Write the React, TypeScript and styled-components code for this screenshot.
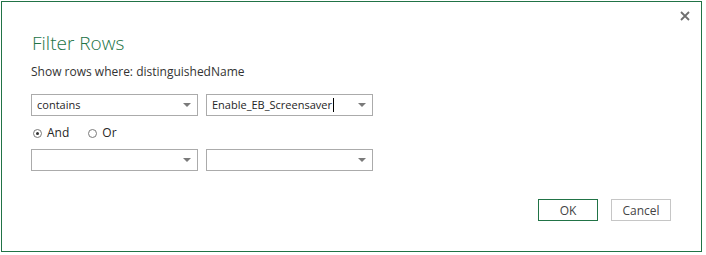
import styled, { createGlobalStyle } from "styled-components";

const GlobalStyle = createGlobalStyle`
  html, body {
    margin: 0;
    padding: 0;
    background: #ffffff;
  }
  body {
    font-family: "Open Sans", "Noto Sans", "Liberation Sans", sans-serif;
    color: #262626;
  }
`;

interface DropdownProps {
  value?: string;
  editing?: boolean;
}

const Dropdown = ({ value, editing }: DropdownProps) => {
  return (
    <Select>
      <SelectValue>
        {value}
        {editing && <Caret />}
      </SelectValue>
      <Arrow />
    </Select>
  );
};

interface RadioProps {
  label: string;
  checked?: boolean;
}

const Radio = ({ label, checked }: RadioProps) => {
  return (
    <RadioLabel>
      <RadioCircle>{checked && <RadioDot />}</RadioCircle>
      {label}
    </RadioLabel>
  );
};

const App = () => {
  return (
    <>
      <GlobalStyle />
      <Dialog>
        <TopBar>
          <CloseButton aria-label="Close">
            <svg width="10" height="10" viewBox="0 0 10 10">
              <path
                d="M1 1 L9 9 M9 1 L1 9"
                stroke="#6f6f6f"
                strokeWidth="1.8"
                fill="none"
              />
            </svg>
          </CloseButton>
        </TopBar>
        <Content>
          <Title>Filter Rows</Title>
          <Subtitle>Show rows where: distinguishedName</Subtitle>
          <FilterRow $top={14}>
            <Dropdown value="contains" />
            <Dropdown value="Enable_EB_Screensaver" editing />
          </FilterRow>
          <RadioRow>
            <Radio label="And" checked />
            <Radio label="Or" />
          </RadioRow>
          <FilterRow $top={8}>
            <Dropdown />
            <Dropdown />
          </FilterRow>
        </Content>
        <ActionBar>
          <Button $primary>OK</Button>
          <Button>Cancel</Button>
        </ActionBar>
      </Dialog>
    </>
  );
};

export default App;

const Dialog = styled.div`
  box-sizing: border-box;
  margin: 1px 0 0 1px;
  width: 701px;
  height: 251px;
  border: 1px solid #217346;
  background: #ffffff;
  display: flex;
  flex-direction: column;
`;

const TopBar = styled.div`
  display: flex;
  justify-content: flex-end;
  padding: 9px 11px 0 0;
  height: 18px;
`;

const CloseButton = styled.button`
  border: none;
  background: none;
  padding: 0;
  width: 10px;
  height: 10px;
  display: flex;
  cursor: pointer;
`;

const Content = styled.div`
  display: flex;
  flex-direction: column;
  padding-left: 29px;
`;

const Title = styled.h1`
  margin: 0;
  font-size: 19px;
  font-weight: 300;
  line-height: 28px;
  color: #217346;
  padding-left: 1px;
`;

const Subtitle = styled.div`
  margin-top: 7px;
  font-size: 12px;
  line-height: 16px;
  color: #333333;
`;

const FilterRow = styled.div<{ $top: number }>`
  display: flex;
  gap: 8px;
  margin-top: ${(p) => p.$top}px;
`;

const Select = styled.div`
  box-sizing: border-box;
  width: 167px;
  height: 22px;
  border: 1px solid #ababab;
  display: flex;
  align-items: center;
  padding: 0 6px 0 5px;
`;

const SelectValue = styled.span`
  flex: 1;
  font-size: 11px;
  line-height: 16px;
  color: #262626;
  display: flex;
  align-items: center;
`;

const Caret = styled.span`
  display: inline-block;
  width: 1px;
  height: 14px;
  background: #000000;
  margin-left: 1px;
`;

const Arrow = styled.span`
  width: 0;
  height: 0;
  border-left: 4px solid transparent;
  border-right: 4px solid transparent;
  border-top: 4px solid #7a7a7a;
`;

const RadioRow = styled.div`
  display: flex;
  gap: 19px;
  margin-top: 9px;
  padding-left: 2px;
`;

const RadioLabel = styled.label`
  display: flex;
  align-items: center;
  gap: 5px;
  font-size: 12px;
  line-height: 16px;
  color: #262626;
`;

const RadioCircle = styled.span`
  box-sizing: border-box;
  width: 9px;
  height: 9px;
  border: 1px solid #7a7a7a;
  border-radius: 50%;
  display: flex;
  align-items: center;
  justify-content: center;
`;

const RadioDot = styled.span`
  width: 3px;
  height: 3px;
  border-radius: 50%;
  background: #333333;
`;

const ActionBar = styled.div`
  display: flex;
  justify-content: flex-end;
  gap: 13px;
  margin-top: 28px;
  padding-right: 30px;
`;

const Button = styled.button<{ $primary?: boolean }>`
  box-sizing: border-box;
  width: 60px;
  height: 22px;
  padding: 0;
  background: #ffffff;
  border: 1px solid ${(p) => (p.$primary ? "#217346" : "#c6c6c6")};
  font-family: "Open Sans", "Noto Sans", "Liberation Sans", sans-serif;
  font-size: 12px;
  color: #444444;
  cursor: pointer;
`;
